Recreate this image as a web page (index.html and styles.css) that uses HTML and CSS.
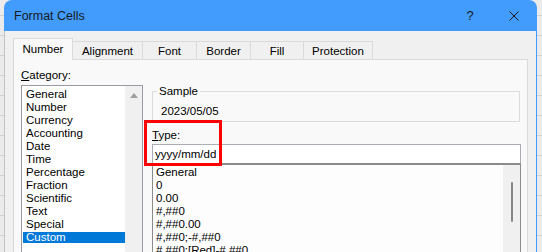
FILE: index.html
```html
<!DOCTYPE html>
<html>
<head>
<meta charset="utf-8">
<link rel="stylesheet" href="styles.css">
</head>
<body>
<div class="dialog">
  <div class="titlebar">
    <span class="title">Format Cells</span>
    <span class="cap-btn help">?</span>
    <span class="cap-btn close"><svg width="10" height="10" viewBox="0 0 10 10"><path d="M0.5 0.5L9.5 9.5M9.5 0.5L0.5 9.5" stroke="#1a1a1a" stroke-width="1"/></svg></span>
  </div>
  <div class="client">
    <div class="tabs">
      <div class="tab active t-number">Number</div>
      <div class="tab t-alignment">Alignment</div>
      <div class="tab t-font">Font</div>
      <div class="tab t-border">Border</div>
      <div class="tab t-fill">Fill</div>
      <div class="tab t-protection">Protection</div>
    </div>
    <div class="panel">
      <div class="col-left">
        <div class="label"><u>C</u>ategory:</div>
        <div class="listbox cat">
          <div class="items">
            <div class="item">General</div>
            <div class="item">Number</div>
            <div class="item">Currency</div>
            <div class="item">Accounting</div>
            <div class="item">Date</div>
            <div class="item">Time</div>
            <div class="item">Percentage</div>
            <div class="item">Fraction</div>
            <div class="item">Scientific</div>
            <div class="item">Text</div>
            <div class="item">Special</div>
            <div class="item selected">Custom</div>
          </div>
          <div class="vscroll"><span class="arrow-up"></span></div>
        </div>
      </div>
      <div class="col-right">
        <fieldset class="sample">
          <legend>Sample</legend>
          <div class="sample-value">2023/05/05</div>
        </fieldset>
        <div class="label type-label"><u>T</u>ype:</div>
        <div class="input">yyyy/mm/dd</div>
        <div class="listbox typelist">
          <div class="items">
            <div class="item">General</div>
            <div class="item">0</div>
            <div class="item">0.00</div>
            <div class="item">#,##0</div>
            <div class="item">#,##0.00</div>
            <div class="item">#,##0;-#,##0</div>
            <div class="item">#,##0;[Red]-#,##0</div>
          </div>
          <div class="vscroll"><span class="thumb"></span></div>
        </div>
        <div class="highlight-box"></div>
      </div>
    </div>
  </div>
</div>
</body>
</html>
```
FILE: styles.css
```css
* { box-sizing: border-box; }
html, body { margin: 0; height: 252px; overflow: hidden; }
body {
  background-color: #ebebeb;
  background-image: repeating-linear-gradient(to bottom, transparent 0 15px, #d2d2d2 15px 16px, transparent 16px 20px);
  font-family: "Liberation Sans", Arial, sans-serif;
  font-size: 11.5px;
  color: #000;
}
.dialog {
  margin-left: 4px;
  width: 533px;
  height: 252px;
  border-radius: 8px 8px 0 0;
  overflow: hidden;
  display: flex;
  flex-direction: column;
}
.titlebar {
  height: 31px;
  flex: none;
  background: #419cfe;
  display: flex;
  align-items: center;
  padding-left: 10px;
  color: #1a1a1a;
  font-size: 12.5px;
}
.title { flex: 1; }
.cap-btn { display: flex; align-items: center; justify-content: center; height: 31px; }
.help { width: 42px; font-size: 13px; }
.close { width: 46px; }
.client {
  flex: 1;
  background: #f0f0f0;
  border-left: 1px solid #c4c4c4;
  border-right: 1px solid #3f9bfd;
  padding: 7px 8px 0 8px;
  display: flex;
  flex-direction: column;
}
.tabs { display: flex; align-items: flex-end; height: 21px; flex: none; position: relative; z-index: 1; }
.tab {
  height: 18px;
  border: 1px solid #dadada;
  border-bottom: none;
  margin-left: -1px;
  background: #f0f0f0;
  display: flex;
  align-items: center;
  justify-content: center;
  line-height: 13px;
  padding-top: 1px;
}
.tab.active { height: 22px; margin-bottom: -1px; margin-left: 0; background: #f9f9f9; padding-top: 1px; padding-bottom: 1px; }
.t-number { width: 60px; }
.t-alignment { width: 71px; }
.t-font { width: 55px; }
.t-border { width: 55px; }
.t-fill { width: 54px; }
.t-protection { width: 70px; }
.panel {
  flex: 1;
  background: #f9f9f9;
  border: 1px solid #dadada;
  display: flex;
  gap: 9px;
  padding: 9px 6px 0 7px;
}
.col-left { width: 122px; flex: none; display: flex; flex-direction: column; }
.col-right { flex: 1; display: flex; flex-direction: column; position: relative; margin-top: 16px; }
.label { line-height: 13px; height: 13px; }
.listbox { display: flex; border: 1px solid #9a9aa2; background: #fff; }
.listbox.cat { margin-top: 3px; height: 175px; }
.items { flex: 1; padding-top: 2px; }
.item { height: 13px; line-height: 13px; margin-left: 1px; padding-left: 3px; white-space: nowrap; }
.item.selected {
  background: linear-gradient(to bottom, transparent 0 1px, #0078d7 1px 12px, transparent 12px);
  color: #fff;
}
.vscroll { width: 17px; flex: none; background: #f0f0f0; display: flex; flex-direction: column; align-items: center; }
.arrow-up {
  margin-top: 7px;
  width: 0; height: 0;
  border-left: 4px solid transparent;
  border-right: 4px solid transparent;
  border-bottom: 5px solid #a0a0a0;
}
.sample {
  margin: 0;
  border: 1px solid #dcdcdc;
  padding: 0 4px 3px 4px;
  margin-right: 1px;
}
.sample legend { padding: 0 2px; line-height: 13px; }
.sample-value { line-height: 13px; margin-top: 7px; padding-left: 4px; }
.type-label { margin-top: 7px; }
.input {
  margin-top: 2px;
  height: 20px;
  border: 1px solid #acacb4;
  border-bottom-color: #8b8b8b;
  background: #fff;
  padding-left: 2px;
  line-height: 18px;
}
.typelist { height: 120px; border-color: #8b8b8b; border-top: 1px solid #8b8b8b; background: #fdfdfd; }
.typelist .items { padding-top: 1px; }
.typelist .item { margin-left: 0; }
.thumb { width: 2px; height: 40px; margin-top: 17px; background: #868686; border-radius: 1px; }
.highlight-box {
  position: absolute;
  left: -8px;
  top: 35px;
  width: 78px;
  height: 46px;
  border: 3px solid #ff0000;
}
```
